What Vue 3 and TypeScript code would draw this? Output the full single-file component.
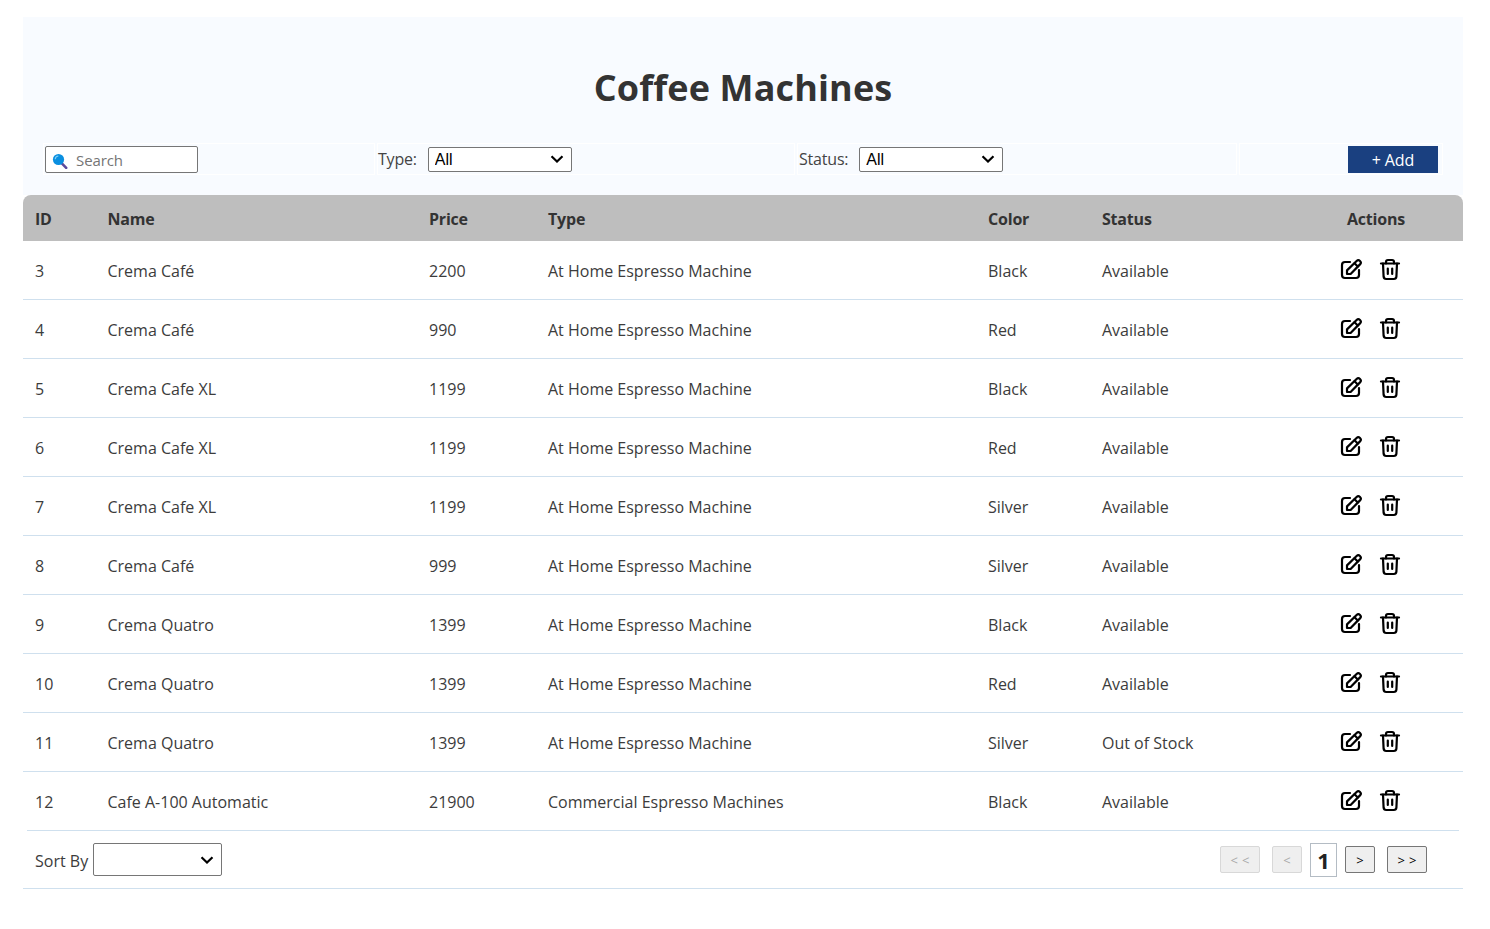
<script setup lang="ts">
interface Machine {
  id: number
  name: string
  price: number
  type: string
  color: string
  status: string
}

const espresso = 'At Home Espresso Machine'

const machines: Machine[] = [
  { id: 3, name: 'Crema Café', price: 2200, type: espresso, color: 'Black', status: 'Available' },
  { id: 4, name: 'Crema Café', price: 990, type: espresso, color: 'Red', status: 'Available' },
  { id: 5, name: 'Crema Cafe XL', price: 1199, type: espresso, color: 'Black', status: 'Available' },
  { id: 6, name: 'Crema Cafe XL', price: 1199, type: espresso, color: 'Red', status: 'Available' },
  { id: 7, name: 'Crema Cafe XL', price: 1199, type: espresso, color: 'Silver', status: 'Available' },
  { id: 8, name: 'Crema Café', price: 999, type: espresso, color: 'Silver', status: 'Available' },
  { id: 9, name: 'Crema Quatro', price: 1399, type: espresso, color: 'Black', status: 'Available' },
  { id: 10, name: 'Crema Quatro', price: 1399, type: espresso, color: 'Red', status: 'Available' },
  { id: 11, name: 'Crema Quatro', price: 1399, type: espresso, color: 'Silver', status: 'Out of Stock' },
  { id: 12, name: 'Cafe A-100 Automatic', price: 21900, type: 'Commercial Espresso Machines', color: 'Black', status: 'Available' }
]
</script>

<template>
  <div class="page">
    <header class="panel">
      <h1 class="title">Coffee Machines</h1>
      <div class="filters">
        <div class="cell">
          <label class="search">
            <svg class="search-icon" viewBox="0 0 16 16" width="16" height="16">
              <path d="M9.6 10.2 L14.2 14.8" stroke="#5b4a9c" stroke-width="2.6" stroke-linecap="round" />
              <circle cx="6.5" cy="6.5" r="5.6" fill="#0a8fe0" />
              <path d="M3.2 6.2 A3.4 3.4 0 0 1 6.4 3" stroke="#7fd0f7" stroke-width="1.2" fill="none" />
            </svg>
            <input class="search-input" type="text" placeholder="Search" />
          </label>
        </div>
        <div class="cell cell-type">
          <span class="filter-label">Type:</span>
          <select class="filter-select"><option>All</option></select>
        </div>
        <div class="cell">
          <span class="filter-label">Status:</span>
          <select class="filter-select"><option>All</option></select>
        </div>
        <div class="cell cell-end">
          <button class="add-btn" type="button">+ Add</button>
        </div>
      </div>
    </header>

    <table class="machines">
      <colgroup>
        <col style="width: 72.5px" />
        <col style="width: 321.5px" />
        <col style="width: 119px" />
        <col style="width: 440px" />
        <col style="width: 114px" />
        <col style="width: 220px" />
        <col />
      </colgroup>
      <thead>
        <tr>
          <th>ID</th>
          <th>Name</th>
          <th>Price</th>
          <th>Type</th>
          <th>Color</th>
          <th>Status</th>
          <th>Actions</th>
        </tr>
      </thead>
      <tbody>
        <tr v-for="m in machines" :key="m.id">
          <td>{{ m.id }}</td>
          <td>{{ m.name }}</td>
          <td>{{ m.price }}</td>
          <td>{{ m.type }}</td>
          <td>{{ m.color }}</td>
          <td>{{ m.status }}</td>
          <td class="actions-cell">
            <div class="actions">
              <svg class="icon" viewBox="0 0 24 24" width="24" height="24" fill="none" stroke="#000" stroke-width="2.2" stroke-linecap="round" stroke-linejoin="round">
                <path d="M11 4H6a3 3 0 0 0-3 3v10a3 3 0 0 0 3 3h11a3 3 0 0 0 3-3v-5" />
                <path d="M8 16v-3.6L17.6 3a2 2 0 0 1 3.4 3.4L11.6 16z" />
                <path d="M15.5 5.2l3.3 3.3" />
              </svg>
              <svg class="icon" viewBox="0 0 24 24" width="24" height="24" fill="none" stroke="#000" stroke-width="2.2" stroke-linecap="round" stroke-linejoin="round">
                <path d="M3 5.5h18" />
                <path d="M8 5.5V4a2 2 0 0 1 2-2h4a2 2 0 0 1 2 2v1.5" />
                <path d="M5 5.5l.6 13.2A2.6 2.6 0 0 0 8.2 21h7.6a2.6 2.6 0 0 0 2.6-2.3L19 5.5" />
                <path d="M9.8 10.5v5.5M14.2 10.5v5.5" />
              </svg>
            </div>
          </td>
        </tr>
      </tbody>
    </table>
    <div class="rule"></div>

    <footer class="footer">
      <div class="sort">
        <span class="sort-label">Sort By</span>
        <select class="sort-select"><option></option></select>
      </div>
      <nav class="pager">
        <button class="page-btn wide" type="button" disabled>&lt;&lt;</button>
        <button class="page-btn" type="button" disabled>&lt;</button>
        <span class="page-current">1</span>
        <button class="page-btn" type="button">&gt;</button>
        <button class="page-btn wide" type="button">&gt;&gt;</button>
      </nav>
    </footer>
  </div>
</template>

<style>
html,
body {
  background: #fff;
}
</style>

<style scoped>
.page {
  margin: 17px 27px 0 23px;
  color: #333;
  font-family: "Open Sans", "Noto Sans", sans-serif;
  font-size: 16px;
}

.panel {
  height: 178px;
  padding: 0 20px;
  box-sizing: border-box;
  background: #f8fbff;
}

.title {
  margin: 0;
  padding-top: 47px;
  height: 126px;
  box-sizing: border-box;
  font-size: 36px;
  line-height: 48px;
  font-weight: 700;
  text-align: center;
  letter-spacing: 0.13px;
}

.filters {
  display: grid;
  grid-template-columns: 332px 418px 440px 1fr;
  column-gap: 2px;
  height: 32px;
}

.cell {
  display: flex;
  align-items: center;
  gap: 11px;
  padding: 0 1px;
  border: 1px solid #fff;
  box-sizing: border-box;
}

.cell-type {
  padding-left: 0;
}

.cell-end {
  justify-content: flex-end;
  padding-right: 4px;
}

.search {
  display: flex;
  align-items: center;
  width: 153px;
  height: 27px;
  box-sizing: border-box;
  padding-left: 6px;
  margin-top: 1px;
  background: #fff;
  border: 1px solid #767676;
  border-radius: 2px;
}

.search-icon {
  flex: none;
  margin-top: 2px;
}

.search-input {
  width: 110px;
  margin-left: 8px;
  padding: 0;
  border: 0;
  outline: 0;
  background: transparent;
  font: inherit;
  font-size: 15px;
  letter-spacing: -0.1px;
  color: #333;
}

.search-input::placeholder {
  color: #757575;
}

.filter-label {
  color: #444;
  letter-spacing: -0.2px;
}

.filter-select,
.sort-select {
  appearance: none;
  background: #fff url("data:image/svg+xml,%3Csvg xmlns='http://www.w3.org/2000/svg' viewBox='0 0 14 8'%3E%3Cpath d='M1.5 1.2 7 6.5l5.5-5.3' fill='none' stroke='%23000' stroke-width='2.2'/%3E%3C/svg%3E") no-repeat right 7px center / 14px 8px;
  border: 1px solid #767676;
  border-radius: 2px;
}

.filter-select {
  width: 144px;
  height: 25px;
  padding: 0 0 0 6px;
  font-family: "Liberation Sans", sans-serif;
  font-size: 16px;
  color: #000;
}

.add-btn {
  width: 90px;
  height: 27px;
  margin-top: 1px;
  border: 0;
  background: #1a4080;
  color: #fff;
  font: inherit;
  letter-spacing: -0.15px;
}

.machines {
  width: 100%;
  border-collapse: collapse;
  table-layout: fixed;
}

.machines th {
  height: 44px;
  padding: 2px 12px 0;
  background: #bebebe;
  font-weight: 700;
  text-align: left;
  letter-spacing: -0.2px;
}

.machines th:first-child {
  border-top-left-radius: 8px;
}

.machines th:last-child {
  border-top-right-radius: 8px;
  padding-left: 37px;
}

.machines td {
  height: 56px;
  padding: 2px 12px 0;
  border-bottom: 1px solid #cfe0ee;
  color: #3c3c3c;
}

.machines tbody tr:last-child td {
  border-bottom: 0;
}

.machines td.actions-cell {
  padding-top: 0;
}

.actions {
  display: flex;
  gap: 15px;
  margin-left: 17px;
}

.rule {
  height: 1px;
  margin: 0 4px;
  background: #cfe0ee;
}

.footer {
  display: flex;
  align-items: center;
  justify-content: space-between;
  height: 58px;
  padding: 0 36px 0 12px;
  border-bottom: 1px solid #cfe0ee;
  box-sizing: border-box;
}

.sort {
  display: flex;
  align-items: center;
  gap: 5px;
  color: #3c3c3c;
}

.sort-label {
  padding-top: 2px;
}

.sort-select {
  width: 129px;
  height: 33px;
}

.pager {
  display: flex;
  align-items: center;
  gap: 8px;
}

.page-btn {
  width: 30px;
  height: 27px;
  padding: 0;
  background: #efefef;
  border: 1px solid #767676;
  border-radius: 2px;
  color: #000;
  font-family: "Open Sans", sans-serif;
  font-size: 13px;
  line-height: 27px;
}

.page-btn.wide {
  width: 40px;
  margin: 0 4px;
  letter-spacing: 4px;
  text-indent: 4px;
}

.page-btn.wide:first-child {
  margin-left: 0;
}

.page-btn.wide:last-child {
  margin-right: 0;
}

.page-btn:disabled {
  border-color: #d8d8d8;
  color: #aaa;
}

.page-current {
  display: flex;
  align-items: center;
  justify-content: center;
  width: 27px;
  height: 34px;
  box-sizing: border-box;
  border: 1px solid #b4bcc4;
  font-size: 22px;
  font-weight: 700;
  color: #222;
}
</style>
